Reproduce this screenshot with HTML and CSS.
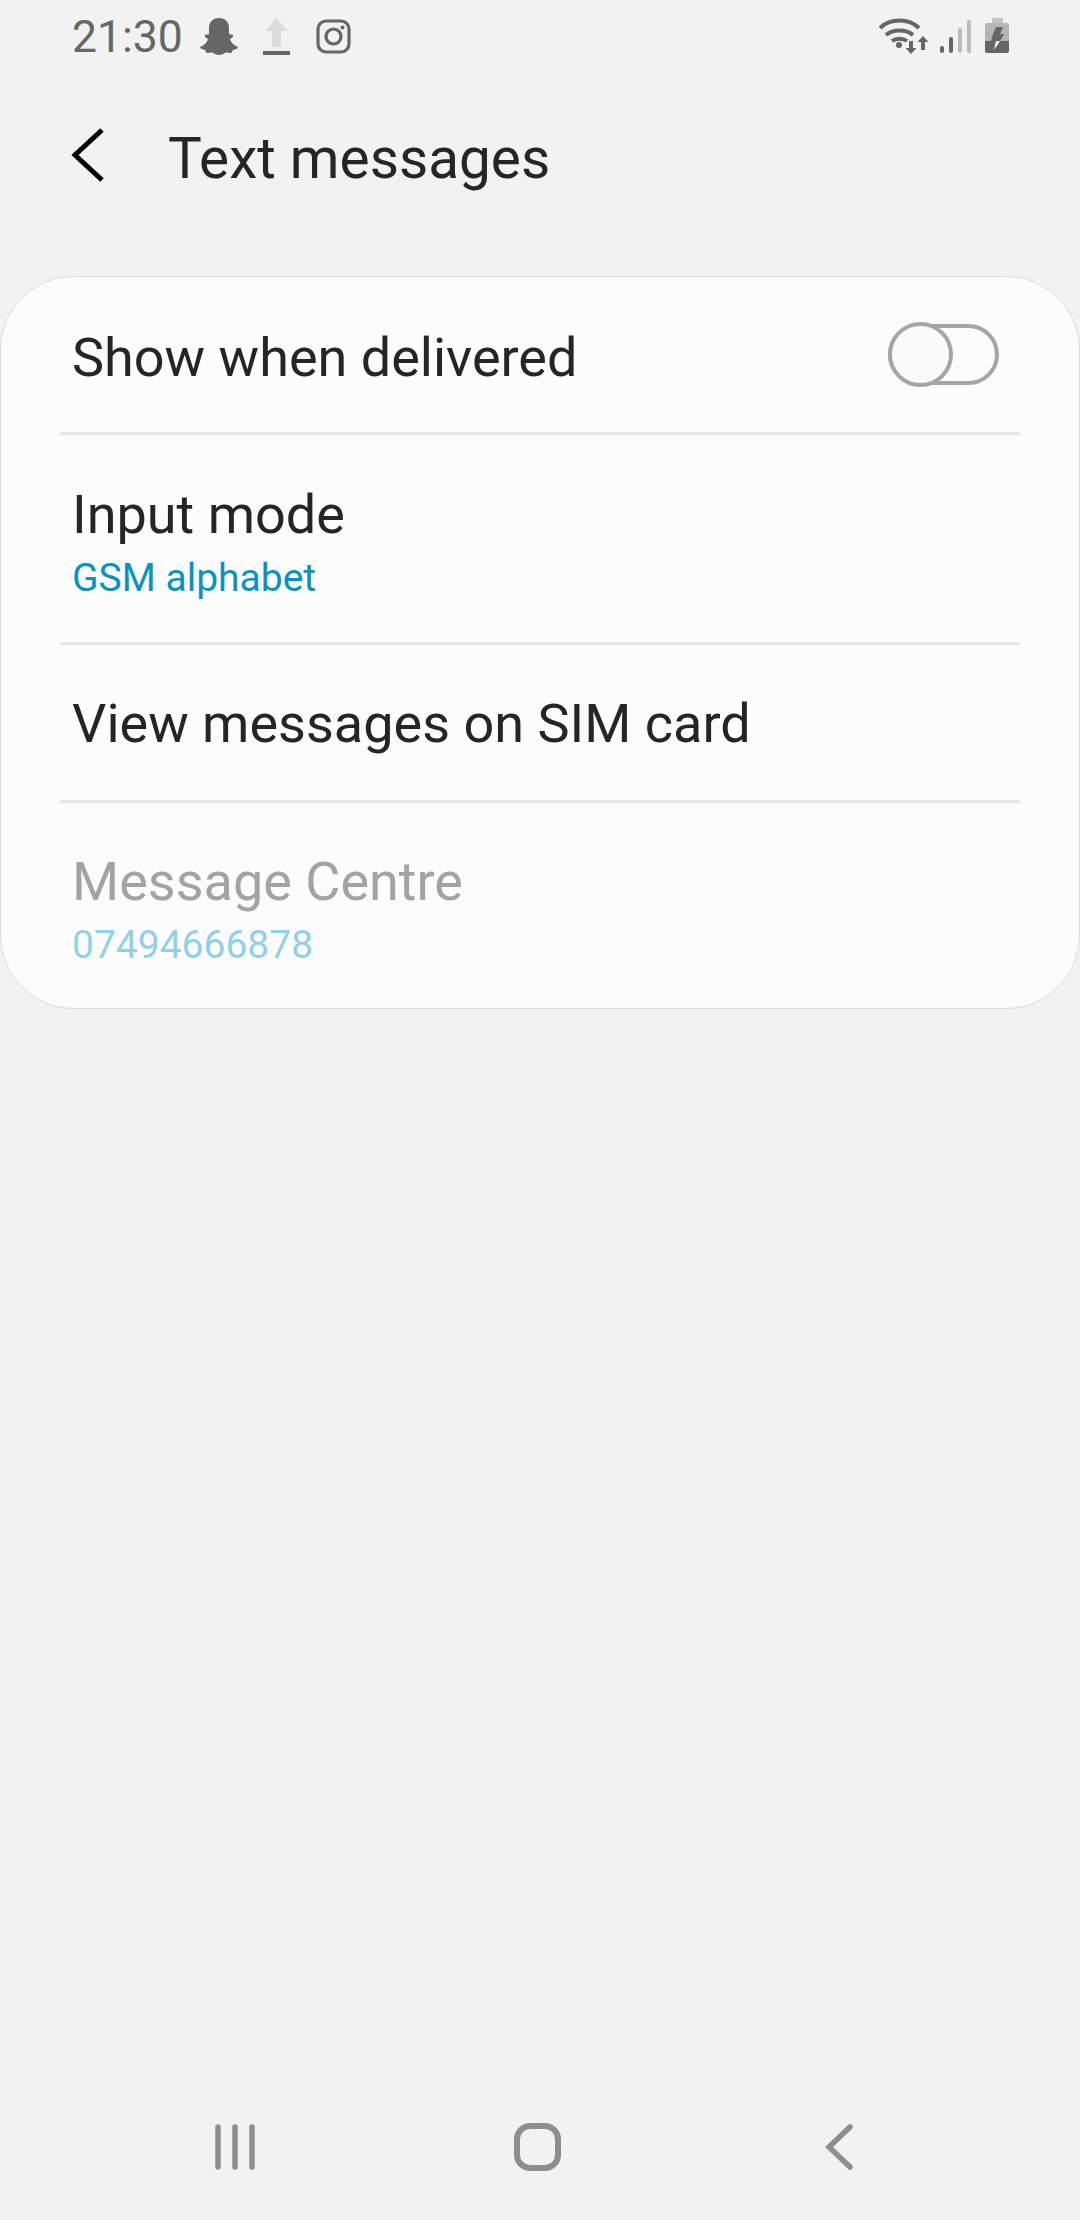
FILE: index.html
```html
<!DOCTYPE html>
<html lang="en">
<head>
  <meta charset="UTF-8">
  <title>Text messages</title>
  <link rel="stylesheet" href="styles.css">
</head>
<body>
  <div class="screen">
    <div class="status-bar">
      <div class="status-left">
        <span class="status-time">21:30</span>
        <svg class="icon-snap" width="38" height="37" viewBox="0 0 38 37">
          <path fill="#666" d="M19 0c6 0 10 4 10 10v6c1 1 3 0 4 1 1 1-1 3-3 4 1 4 5 7 8 8 0 2-3 2-5 3-1 1-1 3-2 3-3 0-4-1-6 0-2 1-4 2-6 2s-4-1-6-2c-2-1-3 0-6 0-1 0-1-2-2-3-2-1-5-1-5-3 3-1 7-4 8-8-2-1-4-3-3-4 1-1 3 0 4-1v-6C9 4 13 0 19 0z"/>
        </svg>
        <svg class="icon-upload" width="27" height="37" viewBox="0 0 27 37">
          <path fill="#dcdcdc" d="M13.500 0 25 13h-7v16H9V13H2z"/>
          <rect y="33" width="27" height="4" fill="#666"/>
        </svg>
        <svg class="icon-insta" width="35" height="35" viewBox="0 0 35 35">
          <rect x="2" y="2" width="31" height="31" rx="8" fill="none" stroke="#666" stroke-width="3.200"/>
          <circle cx="17.500" cy="17.500" r="7.500" fill="none" stroke="#666" stroke-width="3.200"/>
          <circle cx="26.500" cy="8.500" r="2" fill="#666"/>
        </svg>
      </div>
      <div class="status-right">
        <svg class="icon-wifi" width="52" height="36" viewBox="0 0 52 36">
          <g fill="none" stroke="#666" stroke-width="4">
            <path d="M1 10C11 0 30 0 40 10"/>
            <path d="M7 17c7-6 20-6 27 0"/>
            <path d="M13 23c4-3 11-3 15 0"/>
          </g>
          <circle cx="20" cy="27" r="3" fill="#666"/>
          <path fill="#666" d="M30 23h4v7h3.500l-5.500 6-5.500-6H30zM44 18l5.500 6H46v8h-4v-8h-3.500z"/>
        </svg>
        <div class="signal">
          <span class="bar bar-1"></span>
          <span class="bar bar-2"></span>
          <span class="bar bar-3"></span>
          <span class="bar bar-4"></span>
        </div>
        <svg class="icon-battery" width="24" height="35" viewBox="0 0 24 35">
          <path fill="#c4c4c4" d="M7 0h11v5H7z"/>
          <path fill="#b5b5b5" d="M2 5h20c1 0 2 1 2 2v16H0V7c0-1 1-2 2-2z"/>
          <path fill="#666" d="M0 23h24v10c0 1-1 2-2 2H2c-1 0-2-1-2-2z"/>
          <path fill="#666" d="M11 9h7l-3 7h4l-4 7H6l2-7z"/>
          <path fill="#fff" d="M11 23h4l-6 9z"/>
        </svg>
      </div>
    </div>

    <header class="app-bar">
      <svg class="back-arrow" width="33" height="54" viewBox="0 0 33 54">
        <path d="M31 2 4 27l27 25" fill="none" stroke="#000" stroke-width="5"/>
      </svg>
      <h1 class="app-title">Text messages</h1>
    </header>

    <section class="card">
      <div class="row row-single row-toggle">
        <span class="row-title">Show when delivered</span>
        <span class="toggle"><span class="toggle-knob"></span></span>
      </div>
      <div class="row row-double">
        <span class="row-title">Input mode</span>
        <span class="row-sub">GSM alphabet</span>
      </div>
      <div class="row row-single">
        <span class="row-title">View messages on SIM card</span>
      </div>
      <div class="row row-double row-disabled">
        <span class="row-title">Message Centre</span>
        <span class="row-sub">07494666878</span>
      </div>
    </section>

    <nav class="nav-bar">
      <svg width="40" height="46" viewBox="0 0 40 46">
        <g stroke="#8e8e8e" stroke-width="5.500" stroke-linecap="round">
          <path d="M3 3v40M20 3v40M37 3v40"/>
        </g>
      </svg>
      <svg class="nav-home" width="47" height="48" viewBox="0 0 47 48">
        <rect x="3" y="3" width="41" height="42" rx="13" fill="none" stroke="#8e8e8e" stroke-width="6"/>
      </svg>
      <svg width="28" height="46" viewBox="0 0 28 46">
        <path d="M25 3 4 23l21 20" fill="none" stroke="#8e8e8e" stroke-width="5.500" stroke-linecap="round"/>
      </svg>
    </nav>
  </div>
</body>
</html>
```

FILE: styles.css
```css
* {
  box-sizing: border-box;
}

body {
  margin: 0;
  background-color: #f2f2f2;
  font-family: Roboto, "Liberation Sans", sans-serif;
}

.screen {
  width: 1080px;
  height: 2220px;
  display: flex;
  flex-direction: column;
  overflow: hidden;
}

.status-bar {
  height: 72px;
  padding: 18px 71px 0 72px;
  display: flex;
  justify-content: space-between;
  align-items: flex-start;
}

.status-left,
.status-right {
  display: flex;
  align-items: flex-start;
}

.status-time {
  font-size: 44.500px;
  line-height: 38px;
  color: #666;
  margin-right: 17px;
}

.icon-upload {
  margin-left: 25px;
}

.icon-insta {
  margin-left: 26px;
  margin-top: 1px;
}

.icon-wifi {
  margin-right: 9px;
}

.signal {
  width: 31px;
  height: 33px;
  margin-top: 2px;
  display: flex;
  justify-content: space-between;
  align-items: flex-end;
}

.bar {
  width: 4px;
  border-radius: 2px;
  background-color: #666;
}

.bar-1 { height: 7px; }
.bar-2 { height: 16px; }
.bar-3 { height: 25px; background-color: #bbb; }
.bar-4 { height: 33px; background-color: #bbb; }

.icon-battery {
  margin-left: 14px;
}

.app-bar {
  height: 204px;
  padding: 55px 0 0 71px;
  display: flex;
  align-items: flex-start;
}

.back-arrow {
  margin-top: 1px;
}

.app-title {
  margin: 0 0 0 64px;
  font-size: 56.700px;
  line-height: 64px;
  font-weight: 400;
  color: #252525;
}

.card {
  background-color: #fcfcfc;
  border: 1px solid #dcdcdc;
  border-radius: 74px;
  padding: 0 59px;
}

.row {
  display: flex;
  flex-direction: column;
  justify-content: center;
  padding: 0 12px;
  border-bottom: 3px solid #e6e6e6;
}

.row-single {
  height: 158px;
  padding-top: 3px;
}

.row-double {
  height: 210px;
  padding-top: 6px;
}

.row-toggle {
  flex-direction: row;
  justify-content: space-between;
  align-items: center;
  padding-top: 0;
  padding-right: 21px;
}

.row-toggle .row-title {
  margin-top: 6px;
}

.row-disabled {
  height: 205px;
  padding-top: 6px;
  border-bottom: none;
}

.row-title {
  font-size: 54px;
  line-height: 64px;
  color: #252525;
}

.row-sub {
  margin-top: 8px;
  font-size: 39px;
  line-height: 46px;
  color: #0b93bd;
}

.row-disabled .row-title {
  color: #a3a3a3;
}

.row-disabled .row-sub {
  color: #92d0e4;
}

.toggle {
  width: 111px;
  height: 61px;
  border: 4px solid #a5a5a5;
  border-radius: 31px;
  position: relative;
}

.toggle-knob {
  position: absolute;
  left: -4px;
  top: -6px;
  width: 65px;
  height: 65px;
  border: 4px solid #a5a5a5;
  border-radius: 50%;
  background-color: #fafafa;
}

.nav-bar {
  margin-top: auto;
  height: 96px;
  padding: 0 227px 50px 215px;
  display: flex;
  justify-content: space-between;
  align-items: center;
}

.nav-home {
  margin-right: 5px;
}
```
